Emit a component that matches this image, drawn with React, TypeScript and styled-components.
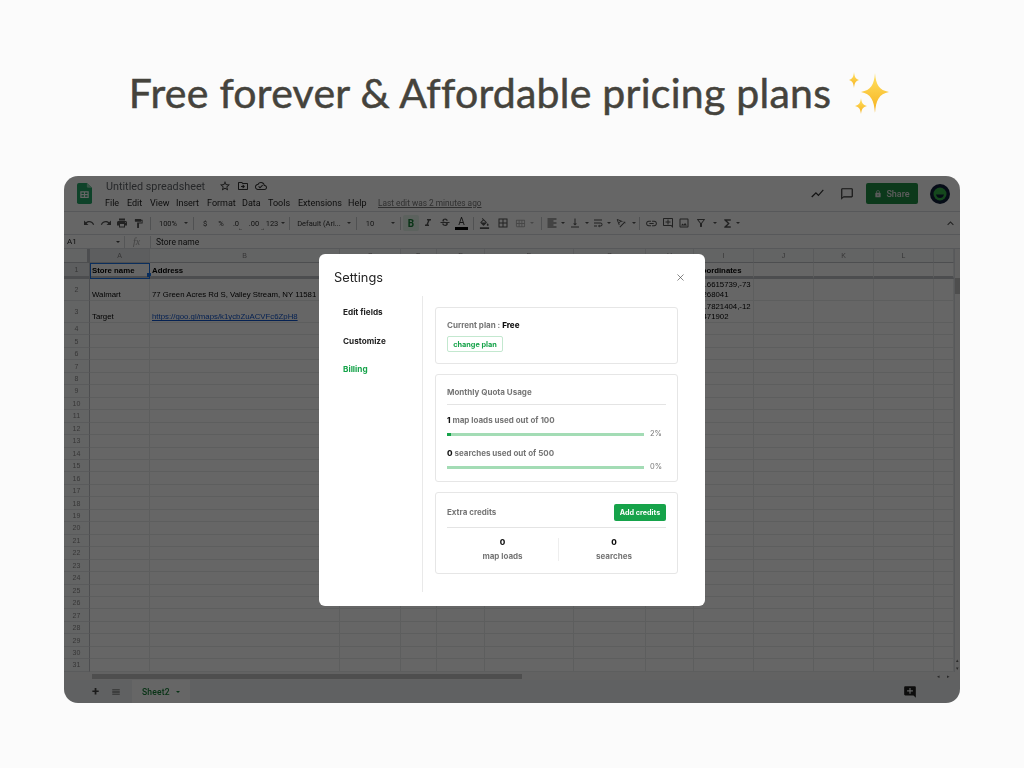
import React from "react";
import styled, { createGlobalStyle } from "styled-components";
import { X } from "lucide-react";
import {
  MdAddComment,
  MdBorderAll,
  MdChatBubbleOutline,
  MdExpandLess,
  MdFormatAlignLeft,
  MdFormatColorFill,
  MdFormatItalic,
  MdFormatPaint,
  MdFunctions,
  MdLink,
  MdLock,
  MdMenu,
  MdOutlineAddComment,
  MdOutlineCalendarViewMonth,
  MdOutlineCloudDone,
  MdOutlineDriveFileMove,
  MdOutlineFilterAlt,
  MdOutlineImage,
  MdPrint,
  MdRedo,
  MdShowChart,
  MdStarBorder,
  MdStrikethroughS,
  MdTextRotationAngleup,
  MdUndo,
  MdVerticalAlignBottom,
  MdWrapText,
} from "react-icons/md";

const GlobalStyle = createGlobalStyle`
  html, body {
    margin: 0;
    padding: 0;
    background: #fbfbfb;
  }
`;

const MENUS: [string, number][] = [
  ["File", 22],
  ["Edit", 23],
  ["View", 26],
  ["Insert", 31],
  ["Format", 35],
  ["Data", 26],
  ["Tools", 30],
  ["Extensions", 50],
  ["Help", 30],
];

const COLUMNS = ["A", "B", "C", "D", "E", "F", "G", "H", "I", "J", "K", "L", ""];
const ROW_COUNT = 31;

const CELLS: Record<string, { text: React.ReactNode; bold?: boolean; link?: boolean; selected?: boolean }> = {
  "1-A": { text: "Store name", bold: true, selected: true },
  "1-B": { text: "Address", bold: true },
  "1-I": { text: "Coordinates", bold: true },
  "2-A": { text: "Walmart" },
  "2-B": { text: "77 Green Acres Rd S, Valley Stream, NY 11581" },
  "2-I": { text: <>40.6615739,-73<br />.7268041</> },
  "3-A": { text: "Target" },
  "3-B": { text: "https://goo.gl/maps/k1ycbZuACVFc6ZpH8", link: true },
  "3-I": { text: <>33.7821404,-12<br />.4471902</> },
};

const Caret = () => <CaretShape />;

const Sparkles = () => (
  <svg width="46" height="44" viewBox="0 0 46 44" aria-hidden="true">
    <defs>
      <linearGradient id="spark" x1="0" y1="0" x2="0" y2="1">
        <stop offset="0" stopColor="#ffe264" />
        <stop offset="1" stopColor="#f6b01c" />
      </linearGradient>
    </defs>
    <path d="M31 2 C32 14 35 19 45 21 C35 23 32 29 31 42 C30 29 27 23 17 21 C27 19 30 14 31 2Z" fill="url(#spark)" />
    <path d="M10 1 C10.6 6 11.5 8 15 9 C11.5 10 10.6 12 10 17 C9.4 12 8.5 10 5 9 C8.5 8 9.4 6 10 1Z" fill="url(#spark)" />
    <path d="M17 27 C17.7 32 18.8 34 23 35 C18.8 36 17.7 38 17 43 C16.3 38 15.2 36 11 35 C15.2 34 16.3 32 17 27Z" fill="url(#spark)" />
  </svg>
);

const SheetsLogo = () => (
  <svg width="15" height="21" viewBox="0 0 16 24" preserveAspectRatio="none" aria-hidden="true">
    <path d="M2 0 H10.5 L16 5.5 V22 a2 2 0 0 1 -2 2 H2 a2 2 0 0 1 -2 -2 V2 a2 2 0 0 1 2 -2Z" fill="#23a566" />
    <path d="M10.5 0 L16 5.5 H12 a1.5 1.5 0 0 1 -1.5 -1.5Z" fill="#8ed1b1" />
    <path d="M3.5 9.5 H12.5 V17 H3.5Z M4.8 10.8 V12.6 H7.4 V10.8Z M8.6 10.8 V12.6 H11.2 V10.8Z M4.8 13.9 V15.7 H7.4 V13.9Z M8.6 13.9 V15.7 H11.2 V13.9Z" fill="#fff" fillRule="evenodd" />
  </svg>
);

const Avatar = () => (
  <svg width="20" height="20" viewBox="0 0 20 20" aria-hidden="true">
    <circle cx="10" cy="10" r="10" fill="#10203a" />
    <circle cx="10" cy="10" r="6.5" fill="#35b34a" />
    <path d="M6 10.5 H14 C13.5 13 11.8 14 10 14 C8.2 14 6.5 13 6 10.5Z" fill="#10203a" />
  </svg>
);

const SheetGrid = () => {
  const rows = Array.from({ length: ROW_COUNT }, (_, i) => i + 1);
  return (
    <Grid>
      <Corner />
      {COLUMNS.map((col, i) => (
        <ColHead key={i} $active={col === "A"}>
          {col}
        </ColHead>
      ))}
      {rows.map((row) => (
        <React.Fragment key={row}>
          <RowHead $active={row === 1} $frozen={row === 1}>
            {row}
          </RowHead>
          {COLUMNS.map((col, i) => {
            const cell = CELLS[`${row}-${col}`];
            return (
              <Cell
                key={i}
                $frozen={row === 1}
                $bold={cell?.bold}
                $link={cell?.link}
                $selected={cell?.selected}
              >
                {cell?.text}
              </Cell>
            );
          })}
        </React.Fragment>
      ))}
    </Grid>
  );
};

const Settings = () => (
  <Modal>
    <ModalHeader>
      <ModalTitle>Settings</ModalTitle>
      <CloseButton>
        <X size={11} strokeWidth={1.4} />
      </CloseButton>
    </ModalHeader>
    <ModalBody>
      <SideNav>
        <NavItem>Edit fields</NavItem>
        <NavItem>Customize</NavItem>
        <NavItem $active>Billing</NavItem>
      </SideNav>
      <Content>
        <PlanCard>
          <Label>
            Current plan : <Strong>Free</Strong>
          </Label>
          <OutlineButton>change plan</OutlineButton>
        </PlanCard>
        <QuotaCard>
          <CardHead>
            <Label>Monthly Quota Usage</Label>
          </CardHead>
          <Usage>
            <Label>
              <Strong>1</Strong> map loads used out of 100
            </Label>
            <BarRow>
              <Track>
                <Fill style={{ width: "2%" }} />
              </Track>
              <Percent>2%</Percent>
            </BarRow>
          </Usage>
          <Usage>
            <Label>
              <Strong>0</Strong> searches used out of 500
            </Label>
            <BarRow>
              <Track>
                <Fill style={{ width: "0%" }} />
              </Track>
              <Percent>0%</Percent>
            </BarRow>
          </Usage>
        </QuotaCard>
        <CreditsCard>
          <CreditsHead>
            <Label>Extra credits</Label>
            <SolidButton>Add credits</SolidButton>
          </CreditsHead>
          <Stats>
            <Stat>
              <Strong>0</Strong>
              <Label>map loads</Label>
            </Stat>
            <Stat>
              <Strong>0</Strong>
              <Label>searches</Label>
            </Stat>
          </Stats>
        </CreditsCard>
      </Content>
    </ModalBody>
  </Modal>
);

const App = () => {
  return (
    <Page>
      <GlobalStyle />
      <Hero>
        <Headline>Free forever &amp; Affordable pricing plans</Headline>
        <Sparkles />
      </Hero>
      <Window>
        <Sheet>
          <TitleBar>
            <LogoSlot>
              <SheetsLogo />
            </LogoSlot>
            <TitleBlock>
              <TitleRow>
                <DocName>Untitled spreadsheet</DocName>
                <TitleIcons>
                  <MdStarBorder size={12} />
                  <MdOutlineDriveFileMove size={12} />
                  <MdOutlineCloudDone size={12} />
                </TitleIcons>
              </TitleRow>
              <MenuRow>
                {MENUS.map(([name, w]) => (
                  <MenuItem key={name} style={{ width: w }}>
                    {name}
                  </MenuItem>
                ))}
                <LastEdit>Last edit was 2 minutes ago</LastEdit>
              </MenuRow>
            </TitleBlock>
            <TitleActions>
              <TrendSlot>
                <MdShowChart size={15} />
              </TrendSlot>
              <CommentSlot>
                <MdChatBubbleOutline size={14} />
              </CommentSlot>
              <ShareButton>
                <MdLock size={8} />
                Share
              </ShareButton>
              <Avatar />
            </TitleActions>
          </TitleBar>

          <Toolbar>
            <Tool $w={17}><MdUndo size={12} /></Tool>
            <Tool $w={17}><MdRedo size={12} /></Tool>
            <Tool $w={16}><MdPrint size={12} /></Tool>
            <Tool $w={17}><MdFormatPaint size={11} /></Tool>
            <Sep />
            <TextTool $w={28}>100%</TextTool>
            <Tool $w={8}><Caret /></Tool>
            <Sep />
            <TextTool $w={16}>$</TextTool>
            <TextTool $w={16}>%</TextTool>
            <TextTool $w={14}>.0<Arrow>←</Arrow></TextTool>
            <TextTool $w={22}>.00<Arrow>→</Arrow></TextTool>
            <TextTool $w={14}>123</TextTool>
            <Tool $w={7}><Caret /></Tool>
            <Sep />
            <TextTool $w={52}>Default (Ari...</TextTool>
            <Tool $w={8}><Caret /></Tool>
            <Sep />
            <TextTool $w={20}>10</TextTool>
            <Tool $w={9} />
            <Tool $w={8}><Caret /></Tool>
            <Sep />
            <BoldTool>B</BoldTool>
            <Tool $w={16}><MdFormatItalic size={12} /></Tool>
            <Tool $w={17}><MdStrikethroughS size={12} /></Tool>
            <ColorTool>A</ColorTool>
            <Sep />
            <Tool $w={14}><MdFormatColorFill size={11} /></Tool>
            <Tool $w={23}><MdBorderAll size={12} /></Tool>
            <DimTool $w={12}><MdOutlineCalendarViewMonth size={11} /></DimTool>
            <DimTool $w={12}><Caret /></DimTool>
            <Sep />
            <Tool $w={14}><MdFormatAlignLeft size={12} /></Tool>
            <Tool $w={7}><Caret /></Tool>
            <Tool $w={18}><MdVerticalAlignBottom size={12} /></Tool>
            <Tool $w={5}><Caret /></Tool>
            <Tool $w={18}><MdWrapText size={12} /></Tool>
            <Tool $w={4}><Caret /></Tool>
            <Tool $w={20}><MdTextRotationAngleup size={12} /></Tool>
            <Tool $w={5}><Caret /></Tool>
            <Sep />
            <Tool $w={16}><MdLink size={13} /></Tool>
            <Tool $w={17}><MdOutlineAddComment size={12} /></Tool>
            <Tool $w={15}><MdOutlineImage size={12} /></Tool>
            <Tool $w={20}><MdOutlineFilterAlt size={12} /></Tool>
            <Tool $w={7}><Caret /></Tool>
            <Tool $w={18}><MdFunctions size={13} /></Tool>
            <Tool $w={4}><Caret /></Tool>
            <CollapseSlot>
              <MdExpandLess size={13} />
            </CollapseSlot>
          </Toolbar>

          <FormulaBar>
            <NameBox>A1</NameBox>
            <Tool $w={8}><Caret /></Tool>
            <FormulaSep />
            <Fx>fx</Fx>
            <FormulaSep />
            <FormulaText>Store name</FormulaText>
          </FormulaBar>

          <GridArea>
            <SheetGrid />
            <VScroll>
              <VThumb />
              <VArrows>
                <ArrowBox>▴</ArrowBox>
                <ArrowBox>▾</ArrowBox>
              </VArrows>
            </VScroll>
          </GridArea>

          <HScroll>
            <HThumb />
            <HArrows>
              <ArrowBox>◂</ArrowBox>
              <ArrowBox>▸</ArrowBox>
            </HArrows>
          </HScroll>

          <TabBar>
            <TabIcons>
              <TabPlus>+</TabPlus>
              <MdMenu size={10} />
            </TabIcons>
            <SheetTab>
              Sheet2
              <Caret />
            </SheetTab>
            <Explore>
              <MdAddComment size={14} />
            </Explore>
          </TabBar>
        </Sheet>

        <Overlay>
          <Settings />
        </Overlay>
      </Window>
    </Page>
  );
};

export default App;

const Page = styled.div`
  width: 1024px;
  height: 768px;
  padding: 0 64px;
  box-sizing: border-box;
  overflow: hidden;
  background: #fbfbfb;
`;

const Hero = styled.header`
  height: 176px;
  padding-top: 9px;
  padding-right: 5px;
  box-sizing: border-box;
  display: flex;
  align-items: center;
  justify-content: center;
  gap: 13px;
`;

const Headline = styled.h1`
  margin: 0;
  color: #45433c;
  font-family: "Lato", "Liberation Sans", sans-serif;
  font-size: 41px;
  font-weight: 400;
  letter-spacing: 0.25px;
  white-space: nowrap;
  -webkit-text-stroke: 0.5px #45433c;
`;

const Window = styled.section`
  position: relative;
  width: 896px;
  height: 527px;
  border-radius: 14px;
  overflow: hidden;
`;

const Sheet = styled.div`
  display: flex;
  flex-direction: column;
  height: 100%;
  background: #fff;
  color: #444;
  font-family: "Roboto", "Liberation Sans", sans-serif;
  filter: blur(0.4px);
`;

const TitleBar = styled.div`
  flex: 0 0 36px;
  display: flex;
  align-items: center;
  border-bottom: 1px solid #dadce0;
  box-sizing: border-box;
`;

const LogoSlot = styled.div`
  flex: 0 0 42px;
  display: flex;
  justify-content: center;
  padding-right: 1px;
  box-sizing: border-box;
`;

const TitleBlock = styled.div`
  flex: 1;
  display: flex;
  flex-direction: column;
  gap: 5px;
`;

const TitleRow = styled.div`
  display: flex;
  align-items: center;
  gap: 14px;
`;

const DocName = styled.span`
  font-size: 10.8px;
  color: #5f6368;
`;

const TitleIcons = styled.span`
  display: flex;
  gap: 6px;
  color: #333;
`;

const MenuRow = styled.div`
  display: flex;
  align-items: center;
  margin-left: -1px;
`;

const MenuItem = styled.span`
  font-size: 9px;
  color: #222;
`;

const LastEdit = styled.span`
  font-size: 8.3px;
  color: #777;
  text-decoration: underline;
`;

const TitleActions = styled.div`
  display: flex;
  align-items: center;
  padding-right: 10px;
  color: #333;
`;

const TrendSlot = styled.span`
  display: flex;
  margin-right: 15px;
`;

const CommentSlot = styled.span`
  display: flex;
  margin-right: 12px;
`;

const ShareButton = styled.div`
  width: 52px;
  height: 21px;
  margin-right: 12px;
  border-radius: 2px;
  background: #1f8f45;
  color: #e4e4e4;
  display: flex;
  align-items: center;
  justify-content: center;
  gap: 4px;
  font-size: 9px;
  font-weight: 500;
`;

const Toolbar = styled.div`
  flex: 0 0 23px;
  box-sizing: border-box;
  display: flex;
  align-items: center;
  padding-left: 16px;
  border-bottom: 1px solid #dadce0;
  color: #555;
`;

const Tool = styled.span<{ $w: number }>`
  position: relative;
  flex: 0 0 ${(p) => p.$w}px;
  display: flex;
  align-items: center;
  justify-content: center;
`;

const DimTool = styled(Tool)`
  opacity: 0.45;
`;

const TextTool = styled(Tool)`
  font-size: 7.5px;
  color: #333;
  white-space: nowrap;
`;

const Arrow = styled.span`
  position: absolute;
  right: 0;
  bottom: -3px;
  font-size: 5px;
  line-height: 5px;
`;

const BoldTool = styled.span`
  flex: 0 0 16px;
  height: 16px;
  margin: 0 1px 0 -1px;
  background: #e6f4ea;
  border-radius: 2px;
  color: #188038;
  display: flex;
  align-items: center;
  justify-content: center;
  font-size: 10px;
  font-weight: 700;
`;

const ColorTool = styled.span`
  flex: 0 0 13px;
  margin: 0 2px;
  height: 14px;
  border-bottom: 3px solid #000;
  color: #333;
  display: flex;
  align-items: center;
  justify-content: center;
  font-size: 10px;
  box-sizing: border-box;
`;

const Sep = styled.span`
  flex: 0 0 1px;
  height: 13px;
  margin: 0 3px;
  background: #c8cacd;
`;

const CaretShape = styled.i`
  display: block;
  flex: none;
  width: 0;
  height: 0;
  border-left: 2.5px solid transparent;
  border-right: 2.5px solid transparent;
  border-top: 2.5px solid currentColor;
`;

const CollapseSlot = styled.span`
  margin-left: auto;
  padding-right: 3px;
  display: flex;
`;

const FormulaBar = styled.div`
  flex: 0 0 14px;
  box-sizing: border-box;
  display: flex;
  align-items: center;
  border-bottom: 1px solid #dadce0;
`;

const NameBox = styled.span`
  flex: 0 0 50px;
  padding-left: 3px;
  box-sizing: border-box;
  font-size: 8px;
  color: #222;
`;

const FormulaSep = styled.span`
  flex: 0 0 1px;
  height: 12px;
  margin-left: 2px;
  background: #d5d7da;
`;

const Fx = styled.span`
  flex: 0 0 23px;
  text-align: center;
  font-family: "Liberation Serif", serif;
  font-style: italic;
  font-size: 10px;
  color: #aaa;
`;

const FormulaText = styled.span`
  padding-left: 5px;
  font-size: 8.5px;
  color: #222;
`;

const GridArea = styled.div`
  flex: 0 0 423px;
  display: flex;
`;

const Grid = styled.div`
  flex: 0 0 890px;
  display: grid;
  grid-template-columns: 26px 60px 190px 61px 36px 48px 89px 72px 48px 60px 60px 60px 60px 20px;
  grid-template-rows: 14px 16px 22px 22px repeat(28, 12.46px);
  font-family: "Liberation Sans", sans-serif;
`;

const Corner = styled.div`
  background: #f8f9fa;
  border-right: 3px solid #bdc1c6;
  border-bottom: 1px solid #c0c3c7;
  box-sizing: border-box;
`;

const ColHead = styled.div<{ $active?: boolean }>`
  background: ${(p) => (p.$active ? "#e8eaed" : "#f8f9fa")};
  border-right: 1px solid #e2e3e5;
  border-bottom: 1px solid #c0c3c7;
  box-sizing: border-box;
  display: flex;
  align-items: center;
  justify-content: center;
  font-size: 7px;
  color: #888;
`;

const RowHead = styled.div<{ $active?: boolean; $frozen?: boolean }>`
  background: ${(p) => (p.$active ? "#e8eaed" : "#f8f9fa")};
  border-right: 1px solid #c0c3c7;
  border-bottom: ${(p) => (p.$frozen ? "3px solid #bdc1c6" : "1px solid #e2e3e5")};
  box-sizing: border-box;
  display: flex;
  align-items: center;
  justify-content: center;
  font-size: 7px;
  color: #888;
`;

const Cell = styled.div<{ $frozen?: boolean; $bold?: boolean; $link?: boolean; $selected?: boolean }>`
  position: relative;
  padding: 0 2px;
  box-sizing: border-box;
  border-right: 1px solid #e9eaea;
  border-bottom: ${(p) => (p.$frozen ? "3px solid #bdc1c6" : "1px solid #e9eaea")};
  outline: ${(p) => (p.$selected ? "1.5px solid #1a73e8" : "none")};
  outline-offset: -1px;
  display: flex;
  align-items: flex-end;
  font-size: 7.8px;
  line-height: 9.8px;
  font-weight: ${(p) => (p.$bold ? 700 : 400)};
  color: ${(p) => (p.$link ? "#1155cc" : "#000")};
  text-decoration: ${(p) => (p.$link ? "underline" : "none")};
  white-space: nowrap;

  ${(p) =>
    p.$selected &&
    `
    &::after {
      content: "";
      position: absolute;
      right: -2px;
      bottom: -1px;
      width: 4px;
      height: 4px;
      background: #1a73e8;
    }
  `}
`;

const VScroll = styled.div`
  flex: 1;
  display: flex;
  flex-direction: column;
  background: #f4f5f5;
  border-left: 1px solid #dadce0;
  padding-top: 29px;
`;

const VThumb = styled.div`
  height: 16px;
  background: #c4c4c4;
`;

const VArrows = styled.div`
  margin-top: auto;
  display: flex;
  flex-direction: column;
`;

const ArrowBox = styled.span`
  height: 8px;
  min-width: 5px;
  display: flex;
  align-items: center;
  justify-content: center;
  font-size: 5px;
  color: #666;
`;

const HScroll = styled.div`
  flex: 0 0 8px;
  display: flex;
  align-items: center;
  justify-content: space-between;
  background: #f4f5f5;
  padding-left: 28px;
  padding-right: 9px;
  box-sizing: border-box;
`;

const HThumb = styled.div`
  width: 430px;
  height: 5px;
  background: #c4c4c4;
`;

const HArrows = styled.div`
  display: flex;
  gap: 5px;
`;

const TabBar = styled.div`
  flex: 1;
  display: flex;
  align-items: stretch;
  background: #f1f3f4;
  color: #444;
`;

const TabIcons = styled.div`
  flex: 0 0 68px;
  display: flex;
  align-items: center;
  padding-left: 28px;
  gap: 12px;
  box-sizing: border-box;
`;

const TabPlus = styled.span`
  font-size: 13px;
  font-weight: 700;
  line-height: 1;
`;

const SheetTab = styled.div`
  flex: 0 0 58px;
  box-sizing: border-box;
  padding-left: 10px;
  display: flex;
  align-items: center;
  gap: 6px;
  background: #fff;
  color: #188038;
  font-size: 8.5px;
  font-weight: 500;
  letter-spacing: 0.2px;
`;

const Explore = styled.div`
  margin-left: auto;
  padding-right: 43px;
  display: flex;
  align-items: center;
  color: #222;
`;

const Overlay = styled.div`
  position: absolute;
  inset: 0;
  padding-top: 78px;
  box-sizing: border-box;
  display: flex;
  justify-content: center;
  align-items: flex-start;
  background: rgba(0, 0, 0, 0.6);
`;

const Modal = styled.div`
  width: 386px;
  height: 352px;
  box-sizing: border-box;
  padding: 0 27px 14px 15px;
  display: flex;
  flex-direction: column;
  background: #fff;
  border-radius: 6px;
  font-family: "Inter", "Liberation Sans", sans-serif;
  filter: blur(0.25px);
`;

const ModalHeader = styled.div`
  flex: 0 0 42px;
  display: flex;
  align-items: center;
  justify-content: space-between;
  padding-top: 4px;
  margin-right: -8px;
  box-sizing: border-box;
`;

const ModalTitle = styled.h2`
  margin: 0;
  font-size: 12.8px;
  font-weight: 400;
  color: #222;
`;

const CloseButton = styled.span`
  display: flex;
  color: #444;
`;

const ModalBody = styled.div`
  flex: 1;
  display: flex;
  min-height: 0;
`;

const SideNav = styled.nav`
  flex: 0 0 89px;
  box-sizing: border-box;
  padding: 12px 0 0 9px;
  display: flex;
  flex-direction: column;
  gap: 19.5px;
  border-right: 1px solid #e9e9e9;
`;

const NavItem = styled.span<{ $active?: boolean }>`
  font-size: 8.2px;
  line-height: 9px;
  font-weight: 700;
  color: ${(p) => (p.$active ? "#16a34a" : "#222")};
`;

const Content = styled.div`
  flex: 1;
  padding: 11px 0 0 12px;
  display: flex;
  flex-direction: column;
  gap: 10px;
`;

const Card = styled.div`
  box-sizing: border-box;
  padding: 0 11px;
  border: 1px solid #e6e6e6;
  border-radius: 3px;
  display: flex;
  flex-direction: column;
  align-items: flex-start;
`;

const PlanCard = styled(Card)`
  height: 57px;
  padding-top: 13px;
  gap: 6px;
`;

const QuotaCard = styled(Card)`
  height: 108px;
`;

const CreditsCard = styled(Card)`
  height: 82px;
`;

const Label = styled.span`
  font-size: 8px;
  line-height: 9px;
  font-weight: 700;
  color: #757575;
`;

const Strong = styled.b`
  font-size: 8px;
  line-height: 9px;
  font-weight: 800;
  color: #111;
`;

const OutlineButton = styled.span`
  box-sizing: border-box;
  width: 56px;
  height: 16px;
  border: 1px solid #c3e8cf;
  border-radius: 2px;
  display: flex;
  align-items: center;
  justify-content: center;
  font-size: 7.3px;
  font-weight: 700;
  color: #16a34a;
`;

const CardHead = styled.div`
  flex: none;
  align-self: stretch;
  height: 30px;
  padding-top: 13px;
  box-sizing: border-box;
  display: flex;
  align-items: flex-start;
  border-bottom: 1px solid #e4e4e4;
  margin-bottom: 11px;
`;

const Usage = styled.div`
  flex: none;
  align-self: stretch;
  margin-bottom: 11px;
  display: flex;
  flex-direction: column;
  gap: 5px;

  &:last-child {
    margin-bottom: 0;
  }
`;

const BarRow = styled.div`
  display: flex;
  align-items: center;
  gap: 6px;
`;

const Track = styled.div`
  width: 197px;
  height: 3px;
  background: #a3dcb5;
`;

const Fill = styled.div`
  height: 100%;
  background: #16a34a;
`;

const Percent = styled.span`
  font-size: 7.5px;
  line-height: 8px;
  color: #777;
`;

const CreditsHead = styled.div`
  flex: none;
  align-self: stretch;
  height: 35px;
  padding-top: 5px;
  box-sizing: border-box;
  border-bottom: 1px solid #e4e4e4;
  display: flex;
  align-items: center;
  justify-content: space-between;
`;

const SolidButton = styled.span`
  width: 52px;
  height: 17px;
  border-radius: 2px;
  background: #16a34a;
  color: #fff;
  display: flex;
  align-items: center;
  justify-content: center;
  font-size: 7.2px;
  font-weight: 700;
`;

const Stats = styled.div`
  align-self: stretch;
  padding-top: 10px;
  display: grid;
  grid-template-columns: 111px 1fr;
`;

const Stat = styled.div`
  height: 23px;
  display: flex;
  flex-direction: column;
  align-items: center;
  justify-content: space-between;

  & + & {
    padding-left: 3px;
    border-left: 1px solid #eee;
  }
`;
